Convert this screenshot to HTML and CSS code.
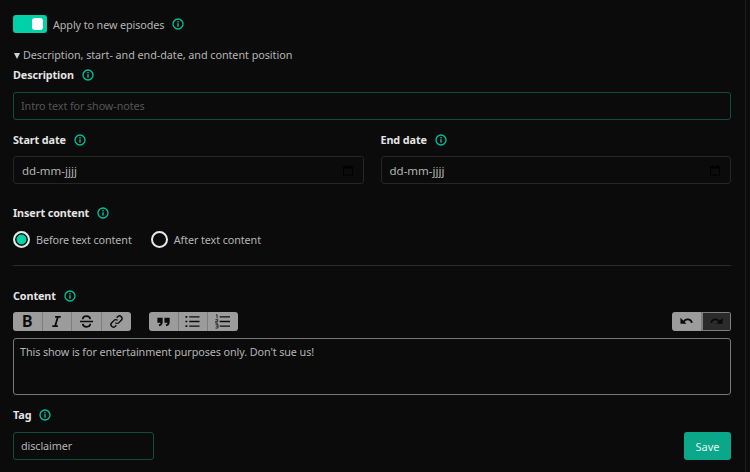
FILE: index.html
```html
<!DOCTYPE html>
<html lang="en">
<head>
  <meta charset="UTF-8" />
  <meta name="viewport" content="width=device-width, initial-scale=1.0"/>
  <title>Episode snippet</title>
  <link rel="stylesheet" href="styles.css">
</head>
<body>
  <main class="page">
    <svg class="defs" width="0" height="0">
      <symbol id="info" viewBox="0 0 12 12">
        <circle cx="6" cy="6" r="5" fill="none" stroke="currentColor" stroke-width="1.3"/>
        <rect x="5.3" y="5.2" width="1.4" height="3.4" fill="currentColor"/>
        <rect x="5.3" y="3" width="1.4" height="1.4" fill="currentColor"/>
      </symbol>
      <symbol id="calendar" viewBox="0 0 12 12">
        <path d="M1.5 3h9v8h-9z M3.5 1v2 M8.5 1v2" fill="none" stroke="currentColor"/>
        <rect x="1.5" y="2.5" width="9" height="2" fill="currentColor"/>
      </symbol>
    </svg>

    <div class="switch-row">
      <span class="switch"><span class="knob"></span></span>
      <span class="switch-label">Apply to new episodes</span>
      <svg class="info"><use href="#info"/></svg>
    </div>

    <div class="summary"><span class="arrow"></span>Description, start- and end-date, and content position</div>

    <div class="label label-first">Description <svg class="info"><use href="#info"/></svg></div>
    <input class="field field-accent full" type="text" placeholder="Intro text for show-notes" />

    <div class="dates">
      <div class="date-col">
        <div class="label">Start date <svg class="info"><use href="#info"/></svg></div>
        <div class="field date">dd-mm-jjjj <svg class="cal"><use href="#calendar"/></svg></div>
      </div>
      <div class="date-col">
        <div class="label">End date <svg class="info"><use href="#info"/></svg></div>
        <div class="field date">dd-mm-jjjj <svg class="cal"><use href="#calendar"/></svg></div>
      </div>
    </div>

    <div class="label label-insert">Insert content <svg class="info"><use href="#info"/></svg></div>
    <div class="radios">
      <span class="radio on"></span><span class="radio-label">Before text content</span>
      <span class="radio"></span><span class="radio-label">After text content</span>
    </div>

    <hr class="divider" />

    <div class="label">Content <svg class="info"><use href="#info"/></svg></div>
    <div class="toolbar">
      <div class="tool-group">
        <button class="tool tool-bold">B</button>
        <button class="tool">
          <svg viewBox="0 0 16 16"><path d="M6.5 3h6M3.5 13h6M9.5 3L6.5 13" fill="none" stroke="currentColor" stroke-width="1.9"/></svg>
        </button>
        <button class="tool">
          <svg viewBox="0 0 16 16"><path d="M1 8h14" stroke="currentColor" stroke-width="1.6"/><path d="M12 5.5C11.7 3.4 9.8 2.3 8 2.3 6 2.3 4 3.4 4 5.5M4 10.5c.3 2.1 2.2 3.2 4 3.2 2 0 4-1.1 4-3.2" fill="none" stroke="currentColor" stroke-width="1.8"/></svg>
        </button>
        <button class="tool">
          <svg viewBox="0 0 16 16"><path d="M6.8 9.2a2.6 2.6 0 0 0 3.8 0l2.7-2.7a2.7 2.7 0 0 0-3.8-3.8L8.2 4M9.2 6.8a2.6 2.6 0 0 0-3.8 0L2.7 9.5a2.7 2.7 0 0 0 3.8 3.8L7.8 12" fill="none" stroke="currentColor" stroke-width="1.5"/></svg>
        </button>
      </div>
      <div class="tool-group">
        <button class="tool">
          <svg viewBox="0 0 16 16"><path d="M1.5 4h5.6v4.7c0 2.4-1.4 3.9-3.7 4.3l-.5-1.7c1.100-.3 1.700-1 1.800-2H1.500zM9 4h5.600v4.700c0 2.400-1.400 3.900-3.700 4.300l-.5-1.700c1.100-.3 1.700-1 1.800-2H9z" fill="currentColor"/></svg>
        </button>
        <button class="tool">
          <svg viewBox="0 0 16 16"><path d="M4.500 3h11M4.500 8h11M4.500 13h11" stroke="currentColor" stroke-width="1.4"/><path d="M.5 3h2M.5 8h2M.5 13h2" stroke="currentColor" stroke-width="1.8"/></svg>
        </button>
        <button class="tool">
          <svg viewBox="0 0 16 16"><path d="M5 3h11M5 8h11M5 13h11" stroke="currentColor" stroke-width="1.4"/><path d="M1 .8h1.200v3.700M.5 6h2.500v1.800H.8v1.800h2.400M.5 11h2.700v4H.5M1 13h2" fill="none" stroke="currentColor" stroke-width=".8"/></svg>
        </button>
      </div>
      <div class="tool-group history">
        <button class="tool">
          <svg viewBox="0 0 16 16"><path d="M5 8.500C6 6.300 8 5.400 10 5.700c1.900.3 3.300 1.700 3.800 3.800" fill="none" stroke="currentColor" stroke-width="1.9"/><path d="M1.500 4v6.500H8z" fill="currentColor"/></svg>
        </button>
        <button class="tool tool-off">
          <svg viewBox="0 0 16 16"><path d="M11 8.500C10 6.300 8 5.400 6 5.700 4.100 6 2.700 7.400 2.200 9.500" fill="none" stroke="currentColor" stroke-width="1.9"/><path d="M14.500 4v6.500H8z" fill="currentColor"/></svg>
        </button>
      </div>
    </div>
    <div class="editor">This show is for entertainment purposes only. Don't sue us!</div>

    <div class="label label-tag">Tag <svg class="info"><use href="#info"/></svg></div>
    <div class="bottom">
      <input class="field field-accent tag" type="text" value="disclaimer" />
      <button class="save">Save</button>
    </div>
  </main>
  <div class="scroll-track"></div>
</body>
</html>
```

FILE: styles.css
```css
html, body {
  height: 100%;
}
body {
  display: flex;
  margin: 0;
  overflow: hidden;
  background-color: #0b0b0b;
  color: #b4b4b4;
  font-family: 'Noto Sans', sans-serif;
  font-size: 10.8px;
  letter-spacing: -0.1px;
}
.defs {
  display: block;
  height: 0;
}
.page {
  flex: 1;
  min-width: 0;
  padding: 14px 14px 0 13px;
}
.scroll-track {
  width: 4px;
  border-left: 1px solid #1c1c1c;
}
.switch-row {
  display: flex;
  align-items: center;
  height: 19px;
}
.switch {
  display: flex;
  justify-content: flex-end;
  align-items: center;
  box-sizing: border-box;
  width: 34px;
  height: 18px;
  padding-right: 4px;
  background-color: #00d1a8;
  border-radius: 3px;
}
.knob {
  width: 11px;
  height: 12px;
  background: #fff;
  border-radius: 3px;
}
.switch-label {
  margin-left: 6px;
  margin-right: 8px;
  padding-top: 2px;
}
.info {
  width: 12px;
  height: 12px;
  color: #00c49d;
  vertical-align: -2px;
  margin-left: 5px;
}
.switch-label + .info {
  margin-left: 0;
}
.summary {
  margin-top: 13px;
  height: 17px;
  line-height: 17px;
  letter-spacing: -0.05px;
}
.arrow {
  display: inline-block;
  width: 0;
  height: 0;
  margin-left: 1px;
  margin-right: 3px;
  border-left: 3.5px solid transparent;
  border-right: 3.5px solid transparent;
  border-top: 6px solid #d0d0d0;
}
.label {
  color: #e4e4e4;
  font-weight: 700;
  line-height: 16px;
}
.label-first {
  margin-top: 4px;
}
.field {
  box-sizing: border-box;
  display: block;
  background: transparent;
  border: 1px solid #262626;
  border-radius: 3px;
  color: #b4b4b4;
  font-family: inherit;
  font-size: 10.8px;
  letter-spacing: -0.1px;
  padding: 0 7px 2px;
  outline: none;
}
.field-accent {
  border-color: #0f4d3f;
}
.field::placeholder {
  color: #555;
}
.full {
  width: 100%;
  height: 28px;
  margin-top: 9px;
}
.dates {
  display: flex;
  gap: 17px;
  margin-top: 12px;
}
.date-col {
  flex: 1;
}
.date {
  display: flex;
  justify-content: space-between;
  align-items: center;
  height: 28px;
  margin-top: 8px;
  padding: 0 8px;
  font-size: 11.5px;
  letter-spacing: 0;
}
.cal {
  width: 12px;
  height: 12px;
  margin-right: 1px;
  color: #000;
}
.label-insert {
  margin-top: 21px;
}
.radios {
  display: flex;
  align-items: center;
  margin-top: 9px;
  height: 18px;
}
.radio {
  box-sizing: border-box;
  width: 17px;
  height: 17px;
  border: 2px solid #e8e8e8;
  border-radius: 50%;
  background: transparent;
}
.radio.on {
  background: #00d1a8;
  box-shadow: inset 0 0 0 1.5px #0b0b0b;
}
.radio-label {
  margin-left: 6px;
  margin-right: 19px;
  padding-top: 1px;
}
.divider {
  margin: 17px 0 22px;
  border: 0;
  border-top: 1px solid #2b2b2b;
}
.toolbar {
  display: flex;
  gap: 18px;
  margin-top: 8px;
}
.history {
  margin-left: auto;
}
.tool-group {
  display: flex;
  height: 19px;
  background: #9c9c9c;
  border-radius: 3px;
  overflow: hidden;
}
.tool {
  display: flex;
  align-items: center;
  justify-content: center;
  width: 29.5px;
  padding: 0;
  border: 0;
  border-right: 1px solid #7e7e7e;
  background: transparent;
  color: #0b0b0b;
  font-family: inherit;
}
.tool:last-child {
  border-right: 0;
}
.tool svg {
  width: 15px;
  height: 15px;
}
.tool-bold {
  font-family: 'Roboto', sans-serif;
  font-size: 16px;
  font-weight: 700;
}
.tool-off {
  background: #2b2b2b;
  box-shadow: inset 0 0 0 1px #7e7e7e;
}
.editor {
  box-sizing: border-box;
  height: 57px;
  margin-top: 7px;
  padding: 5px 6px;
  border: 1px solid #777;
  border-radius: 3px;
  line-height: 16px;
}
.label-tag {
  margin-top: 12px;
}
.bottom {
  display: flex;
  justify-content: space-between;
  margin-top: 9px;
}
.tag {
  width: 141px;
  height: 28px;
}
.save {
  width: 47px;
  height: 28px;
  border: 0;
  border-radius: 3px;
  background-color: #0aa78a;
  color: #e6f5f1;
  font-family: inherit;
  font-size: 11px;
}
```
